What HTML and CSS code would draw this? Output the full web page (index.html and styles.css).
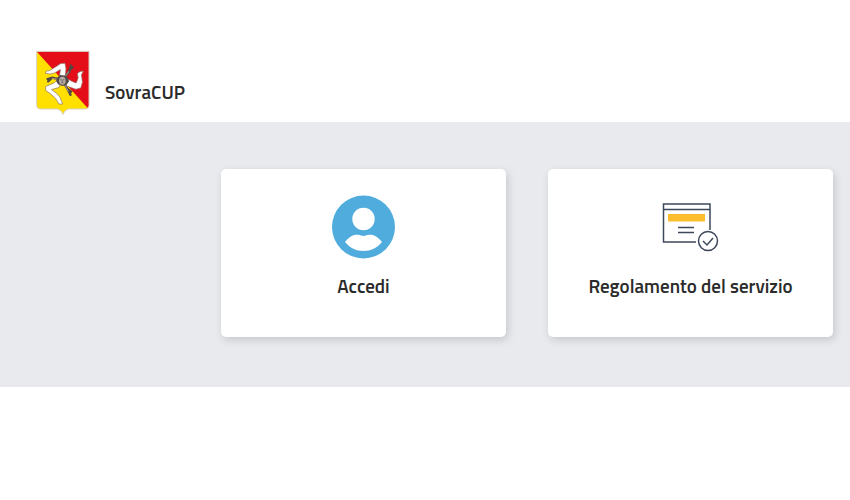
FILE: index.html
```
<!DOCTYPE html>
<html lang="it">
<head>
    <meta charset="UTF-8">
    <meta name="viewport" content="width=device-width, initial-scale=1.0">
    <title>SovraCUP</title>
    <link rel="stylesheet" href="styles.css">
</head>
<body>

<header class="header">
    <svg class="logo" viewBox="18 16 164 196" aria-hidden="true">
        <path d="M20 18H179V182Q179 193 168 193H117Q104 196 100 210Q96 196 83 193H32Q20 193 20 182Z" fill="#ffe000"/>
        <path d="M20 18H179V182Q179 187 174 189Z" fill="#e30e17"/>
        <path d="M20 18H179V182Q179 193 168 193H117Q104 196 100 210Q96 196 83 193H32Q20 193 20 182Z" fill="none" stroke="#d5d1c5" stroke-width="3"/>
        <g fill="#fff" stroke="#8a6f68" stroke-width="2" stroke-linejoin="round">
            <path d="M89 97L92 73L76 83L60 87L46 84L49 78L60 76L78 65L93 55L106 54L109 70L107 98Z"/>
            <path d="M109 99L127 109L140 114L146 99L144 85L152 79L162 78L156 89L159 112L154 129L139 133L103 120Z"/>
            <path d="M96 111L87 128L65 134L80 145L90 156L99 178L88 178L77 160L62 147L48 137L47 125L74 113L84 104Z"/>
        </g>
        <g fill="none" stroke="#514743" stroke-linecap="round">
            <path d="M103 99L119 80L124 61M118 77L129 66M96 104L67 98L53 102M67 98L55 109M102 113L114 133L123 150M113 131L125 140" stroke-width="7"/>
            <path d="M103 99L117 80M95 104L67 100M103 115L116 139" stroke="#99877a" stroke-width="4"/>
        </g>
        <path d="M83 97L91 90L104 91L115 98L118 109L111 119L98 123L85 118L79 108Z" fill="#544b49"/>
        <ellipse cx="98" cy="107" rx="10" ry="12" fill="#b6aaa3"/>
        <path d="M92 104h4M100 104h4M95 113h6M98 105v5" stroke="#4d4442" stroke-width="2"/>
    </svg>
    <h1 class="title">SovraCUP</h1>
</header>

<main class="services">
    <a class="card" href="#accedi">
        <svg class="card-icon" viewBox="0 0 64 64" aria-hidden="true">
            <circle cx="31.5" cy="32" r="31.5" fill="#50acdd"/>
            <circle cx="31.5" cy="24" r="11.2" fill="#fff"/>
            <path d="M13 47C18 41 22 39.5 26 39.8C29 40 29 41 31.5 41C34 41 34 40 37 39.8C41 39.5 45 41 50 47C45 53 39 56 31.5 56C24 56 18 53 13 47Z" fill="#fff"/>
        </svg>
        <span class="card-label">Accedi</span>
    </a>
    <a class="card" href="#regolamento">
        <svg class="card-icon" viewBox="0 0 64 64" aria-hidden="true">
            <g fill="none" stroke="#3e485b" stroke-width="1.5">
                <path d="M37 47H4.5V9H51V35M4.5 14.5H51M19 32.5H35M19 37.5H35"/>
                <circle cx="49" cy="46" r="9.5"/>
                <path d="M44 46L48 50L54 43"/>
            </g>
            <path d="M9 19H46V26.5H9Z" fill="#fdbd2c"/>
        </svg>
        <span class="card-label">Regolamento del servizio</span>
    </a>
</main>

</body>
</html>
```
FILE: styles.css
```
body {
    margin: 0;
    background-color: #fff;
    color: #2b2b2b;
    font-family: "Titillium Web", Roboto, sans-serif;
}
.header {
    display: flex;
    align-items: flex-end;
    gap: 15px;
    padding: 50px 36px 6px;
}
.logo {
    width: 54px;
    height: 66px;
}
.title {
    margin: 0 0 12px;
    font-size: 19px;
    font-weight: 600;
    line-height: 24px;
}
.services {
    display: grid;
    grid-template-columns: 1fr 1fr;
    gap: 42px;
    padding: 47px 17px 50px 26%;
    background-color: #e9eaee;
}
.card {
    display: flex;
    flex-direction: column;
    align-items: center;
    gap: 15px;
    padding: 26px 16px 39px;
    border-radius: 5px;
    background-color: #fff;
    box-shadow: 2px 3px 8px rgba(0, 0, 0, 0.15);
    color: inherit;
    text-decoration: none;
}
.card-icon {
    width: 64px;
    height: 64px;
}
.card-label {
    font-size: 19px;
    font-weight: 600;
    line-height: 24px;
    text-align: center;
}
```
